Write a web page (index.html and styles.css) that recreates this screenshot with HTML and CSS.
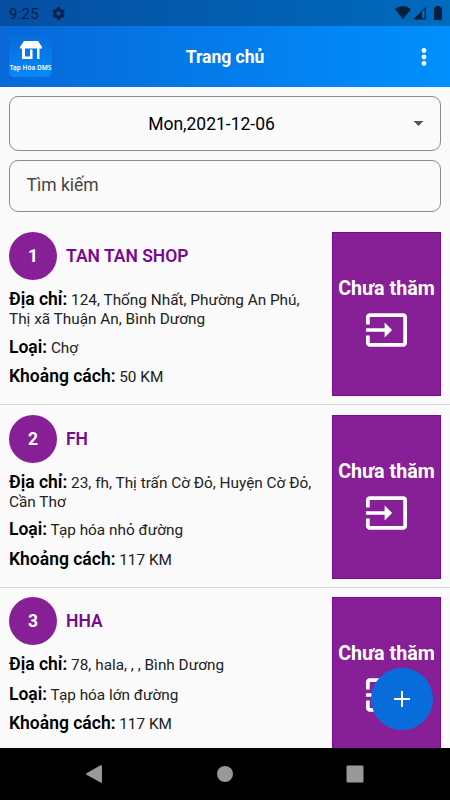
FILE: index.html
```html
<!DOCTYPE html>
<html lang="vi">
<head>
<meta charset="utf-8">
<title>Trang chủ</title>
<link rel="stylesheet" href="styles.css">
</head>
<body>
<div class="screen">
  <header class="top">
    <div class="status">
      <span class="clock">9:25</span>
      <svg class="gear" viewBox="2 2 20 20"><path fill-rule="evenodd" d="M19.14 12.94c.04-.3.06-.61.06-.94s-.02-.64-.07-.94l2.03-1.58c.18-.14.23-.41.12-.61l-1.92-3.32c-.12-.22-.37-.29-.59-.22l-2.39.96c-.5-.38-1.03-.7-1.62-.94l-.36-2.54c-.04-.24-.24-.41-.48-.41h-3.84c-.24 0-.43.17-.47.41l-.36 2.54c-.59.24-1.13.57-1.62.94l-2.39-.96c-.22-.08-.47 0-.59.22L2.74 8.87c-.12.21-.08.47.12.61l2.03 1.58c-.05.3-.09.63-.09.94s.02.64.07.94l-2.03 1.58c-.18.14-.23.41-.12.61l1.92 3.32c.12.22.37.29.59.22l2.39-.96c.5.38 1.03.7 1.62.94l.36 2.54c.05.24.24.41.48.41h3.84c.24 0 .44-.17.47-.41l.36-2.54c.59-.24 1.13-.56 1.62-.94l2.39.96c.22.08.47 0 .59-.22l1.92-3.32c.12-.22.07-.47-.12-.61zM12 15.6a3.6 3.6 0 1 1 0-7.2 3.6 3.6 0 0 1 0 7.2z"/></svg>
      <svg class="signals" viewBox="0 0 48 15"><path d="M0 3.2Q8-3 16 3.2L8 13.2z"/><path fill-rule="evenodd" d="M18 13.5 31 .5v13zM27 5.5v6.8h2.6V3z"/><path d="M41 0h4v1.5h2V14h-8V1.5h2z"/></svg>
    </div>
    <div class="bar">
      <div class="logo">
        <svg viewBox="0 0 22 19"><path d="M4 0h14l4 6v1.500H0V6z"/><path d="M2 7h3v8.500h5V8.500h2.500V18H2zM17 7h2.500v11H17z"/></svg>
        <span>Tạp Hóa DMS</span>
      </div>
      <h1>Trang chủ</h1>
      <svg class="more" viewBox="0 0 6 18"><circle cx="3" cy="2.500" r="2.400"/><circle cx="3" cy="9" r="2.400"/><circle cx="3" cy="15.500" r="2.400"/></svg>
    </div>
  </header>
  <main>
    <div class="field date"><span>Mon,2021-12-06</span><svg viewBox="0 0 10 5"><path d="M0 0h10L5 5z"/></svg></div>
    <div class="field search">Tìm kiếm</div>
    <article class="shop">
      <div class="info">
        <div class="heading"><span class="num">1</span><h2>TAN TAN SHOP</h2></div>
        <p><b>Địa chỉ:</b> 124, Thống Nhất, Phường An Phú,<br>Thị xã Thuận An, Bình Dương</p>
        <p><b>Loại:</b> Chợ</p>
        <p><b>Khoảng cách:</b> 50 KM</p>
      </div>
      <div class="visit"><span>Chưa thăm</span><svg viewBox="1 3 22 18"><path d="M21 3.010H3c-1.100 0-2 .9-2 2V9h2V4.990h18v14.030H3V15H1v4.010c0 1.100.9 1.980 2 1.980h18c1.100 0 2-.88 2-1.980v-14c0-1.110-.9-2-2-2zM11 16l4-4-4-4v3H1v2h10z"/></svg></div>
    </article>
    <article class="shop">
      <div class="info">
        <div class="heading"><span class="num">2</span><h2>FH</h2></div>
        <p><b>Địa chỉ:</b> 23, fh, Thị trấn Cờ Đỏ, Huyện Cờ Đỏ,<br>Cần Thơ</p>
        <p><b>Loại:</b> Tạp hóa nhỏ đường</p>
        <p><b>Khoảng cách:</b> 117 KM</p>
      </div>
      <div class="visit"><span>Chưa thăm</span><svg viewBox="1 3 22 18"><path d="M21 3.010H3c-1.100 0-2 .9-2 2V9h2V4.990h18v14.030H3V15H1v4.010c0 1.100.9 1.980 2 1.980h18c1.100 0 2-.88 2-1.980v-14c0-1.110-.9-2-2-2zM11 16l4-4-4-4v3H1v2h10z"/></svg></div>
    </article>
    <article class="shop">
      <div class="info">
        <div class="heading"><span class="num">3</span><h2>HHA</h2></div>
        <p><b>Địa chỉ:</b> 78, hala, , , Bình Dương</p>
        <p><b>Loại:</b> Tạp hóa lớn đường</p>
        <p><b>Khoảng cách:</b> 117 KM</p>
      </div>
      <div class="visit"><span>Chưa thăm</span><svg viewBox="1 3 22 18"><path d="M21 3.010H3c-1.100 0-2 .9-2 2V9h2V4.990h18v14.030H3V15H1v4.010c0 1.100.9 1.980 2 1.980h18c1.100 0 2-.88 2-1.980v-14c0-1.110-.9-2-2-2zM11 16l4-4-4-4v3H1v2h10z"/></svg></div>
    </article>
  </main>
  <div class="fab"><svg viewBox="0 0 16 16"><path d="M7 0h2v7h7v2H9v7H7V9H0V7h7z"/></svg></div>
  <nav>
    <svg viewBox="0 0 18 18"><path d="M15.500.3Q17 0 17 1.200v15.600Q17 18 15.500 17.500L1.500 9.700Q.7 9 1.500 8.300z"/></svg>
    <svg viewBox="0 0 18 18"><circle cx="9" cy="9" r="8"/></svg>
    <svg viewBox="0 0 18 18"><rect x=".5" y=".5" width="17" height="17" rx="1.200"/></svg>
  </nav>
</div>
</body>
</html>
```
FILE: styles.css
```css
* { box-sizing: border-box; }
body { margin: 0; font-family: Roboto, sans-serif; color: #000; background: #fafafa; }
h1, h2, p { margin: 0; }
.screen { position: relative; width: 450px; height: 800px; overflow: hidden; display: flex; flex-direction: column; }
.top { height: 87px; flex: none; background: linear-gradient(90deg, #0868d8, #0090fd); color: #fff; }
.status { height: 26px; display: flex; align-items: center; padding: 1px 7px 0 9px; background: rgba(0, 0, 0, .25); color: #06213f; fill: #06213f; }
.clock { font-size: 15px; line-height: 26px; width: 43px; letter-spacing: .25px; }
.gear { width: 13px; height: 13px; }
.signals { width: 48px; height: 15px; margin-left: auto; }
.bar { height: 61px; display: flex; align-items: center; justify-content: space-between; padding: 0 23px 0 9px; }
.logo { width: 43px; height: 43px; margin-top: -3px; border-radius: 5px; padding-top: 7px; background: linear-gradient(rgba(0, 140, 255, 0), #0589fa); display: flex; flex-direction: column; align-items: center; }
.logo svg { width: 22px; height: 19px; fill: #fff; }
.logo span { font: 600 6.500px/10px "Noto Sans", sans-serif; white-space: nowrap; margin-top: 3px; }
h1 { font-size: 17.500px; line-height: 24px; font-weight: 700; margin-right: 23px; }
.more { width: 6px; height: 18px; fill: #fff; }
main { flex: 1; min-height: 0; overflow: hidden; padding-top: 9px; }
.field { margin: 0 9px; border: 1px solid #8c8c8c; border-radius: 9px; display: flex; align-items: center; font-size: 17.500px; }
.date { height: 55px; padding-right: 16px; }
.date span { flex: 1; text-align: center; }
.date svg { width: 11px; height: 5px; fill: #555; }
.search { height: 52px; margin-top: 9px; margin-bottom: 10.500px; padding: 0 16.500px 3px; color: #454545; }
.shop { height: 182.500px; padding: 9.500px 9px 8.500px; display: flex; justify-content: space-between; border-bottom: 1px solid #d4d4d4; }
.heading { display: flex; align-items: center; gap: 9px; height: 48px; margin-bottom: 9px; }
.num { width: 48px; height: 48px; border-radius: 50%; background: #872096; color: #fff; font-size: 17.500px; font-weight: 700; display: flex; align-items: center; justify-content: center; }
h2 { color: #780993; font-size: 17.500px; font-weight: 600; }
p { font-size: 15.350px; line-height: 18px; margin-bottom: 8.500px; white-space: nowrap; color: #222; }
p b { font-size: 17.500px; font-weight: 600; line-height: 21px; color: #000; }
.visit { width: 109px; height: 164px; background: #872096; border: 1px solid #780993; color: #fff; display: flex; flex-direction: column; align-items: center; padding-top: 43px; }
.visit span { font-size: 19.700px; line-height: 26px; font-weight: 700; white-space: nowrap; }
.visit svg { width: 41px; height: 34px; margin-top: 11px; fill: #fff; }
.fab { position: absolute; left: 371px; top: 668px; width: 62px; height: 62px; border-radius: 50%; background: #086dda; display: flex; align-items: center; justify-content: center; }
.fab svg { width: 16px; height: 16px; fill: #fff; }
nav { height: 52.500px; flex: none; background: #000; display: flex; justify-content: space-between; align-items: center; padding: 0 86px 0 85px; fill: #999; }
nav svg { width: 18px; height: 18px; }
```
